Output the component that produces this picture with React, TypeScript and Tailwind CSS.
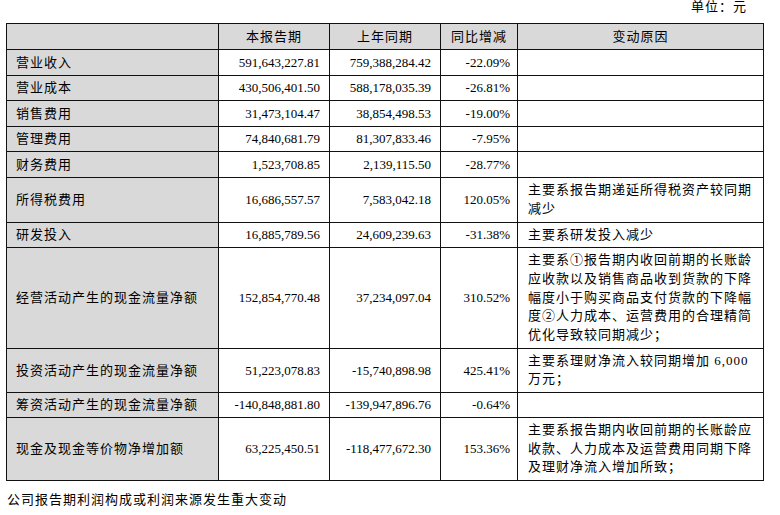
const FONT = "font-['Liberation_Serif','Noto_Sans_CJK_SC',serif]";

type Row = {
  label: string;
  current: string;
  last: string;
  change: string;
  reason?: string[];
  h: string;
};

const rows: Row[] = [
  { label: "营业收入", current: "591,643,227.81", last: "759,388,284.42", change: "-22.09%", h: "h-[26px]" },
  { label: "营业成本", current: "430,506,401.50", last: "588,178,035.39", change: "-26.81%", h: "h-[25px]" },
  { label: "销售费用", current: "31,473,104.47", last: "38,854,498.53", change: "-19.00%", h: "h-[25.5px]" },
  { label: "管理费用", current: "74,840,681.79", last: "81,307,833.46", change: "-7.95%", h: "h-[25.5px]" },
  { label: "财务费用", current: "1,523,708.85", last: "2,139,115.50", change: "-28.77%", h: "h-[25.5px]" },
  {
    label: "所得税费用",
    current: "16,686,557.57",
    last: "7,583,042.18",
    change: "120.05%",
    reason: ["主要系报告期递延所得税资产较同期", "减少"],
    h: "h-[45px]",
  },
  {
    label: "研发投入",
    current: "16,885,789.56",
    last: "24,609,239.63",
    change: "-31.38%",
    reason: ["主要系研发投入减少"],
    h: "h-[25.5px]",
  },
  {
    label: "经营活动产生的现金流量净额",
    current: "152,854,770.48",
    last: "37,234,097.04",
    change: "310.52%",
    reason: [
      "主要系①报告期内收回前期的长账龄",
      "应收款以及销售商品收到货款的下降",
      "幅度小于购买商品支付货款的下降幅",
      "度②人力成本、运营费用的合理精简",
      "优化导致较同期减少；",
    ],
    h: "h-[100.5px]",
  },
  {
    label: "投资活动产生的现金流量净额",
    current: "51,223,078.83",
    last: "-15,740,898.98",
    change: "425.41%",
    reason: ["主要系理财净流入较同期增加 6,000", "万元；"],
    h: "h-[44.5px]",
  },
  {
    label: "筹资活动产生的现金流量净额",
    current: "-140,848,881.80",
    last: "-139,947,896.76",
    change: "-0.64%",
    h: "h-[24.5px]",
  },
  {
    label: "现金及现金等价物净增加额",
    current: "63,225,450.51",
    last: "-118,477,672.30",
    change: "153.36%",
    reason: [
      "主要系报告期内收回前期的长账龄应",
      "收款、人力成本及运营费用同期下降",
      "及理财净流入增加所致；",
    ],
    h: "h-[63.5px]",
  },
];

export default function App() {
  return (
    <div className={`w-[780px] h-[515px] bg-white text-black relative overflow-hidden ${FONT}`}>
      {/* Unit */}
      <div className="flex justify-end pr-[33px] h-[23px]">
        <span className="text-[13px] leading-[14px] tracking-[1px]">单位：元</span>
      </div>

      <table className="ml-[6px] w-[757px] table-fixed border-collapse text-[13px]">
        <colgroup>
          <col className="w-[212px]" />
          <col className="w-[111px]" />
          <col className="w-[111px]" />
          <col className="w-[77px]" />
          <col className="w-[246px]" />
        </colgroup>
        <thead>
          <tr className="h-[26px] bg-[#d9d9d9]">
            <th className="border border-[#111] font-normal" />
            <th className="border border-[#111] font-normal tracking-[1px] text-center">本报告期</th>
            <th className="border border-[#111] font-normal tracking-[1px] text-center">上年同期</th>
            <th className="border border-[#111] font-normal tracking-[1px] text-center">同比增减</th>
            <th className="border border-[#111] font-normal tracking-[1px] text-center">变动原因</th>
          </tr>
        </thead>
        <tbody>
          {rows.map((r) => (
            <tr key={r.label} className={r.h}>
              <td className="border border-[#111] bg-[#d9d9d9] pl-[9px] tracking-[1px] whitespace-nowrap">
                {r.label}
              </td>
              <td className="border border-[#111] pr-[9px] text-right whitespace-nowrap">{r.current}</td>
              <td className="border border-[#111] pr-[9px] text-right whitespace-nowrap">{r.last}</td>
              <td className="border border-[#111] pr-[7px] text-right whitespace-nowrap">{r.change}</td>
              <td className="border border-[#111] pl-[10px] py-[3px] leading-[18.6px] tracking-[1px] whitespace-nowrap">
                {r.reason?.map((line, i) => (
                  <div key={i}>{line}</div>
                ))}
              </td>
            </tr>
          ))}
        </tbody>
      </table>

      <p className="ml-[7px] mt-[9px] text-[13px] tracking-[1px]">公司报告期利润构成或利润来源发生重大变动</p>
    </div>
  );
}
